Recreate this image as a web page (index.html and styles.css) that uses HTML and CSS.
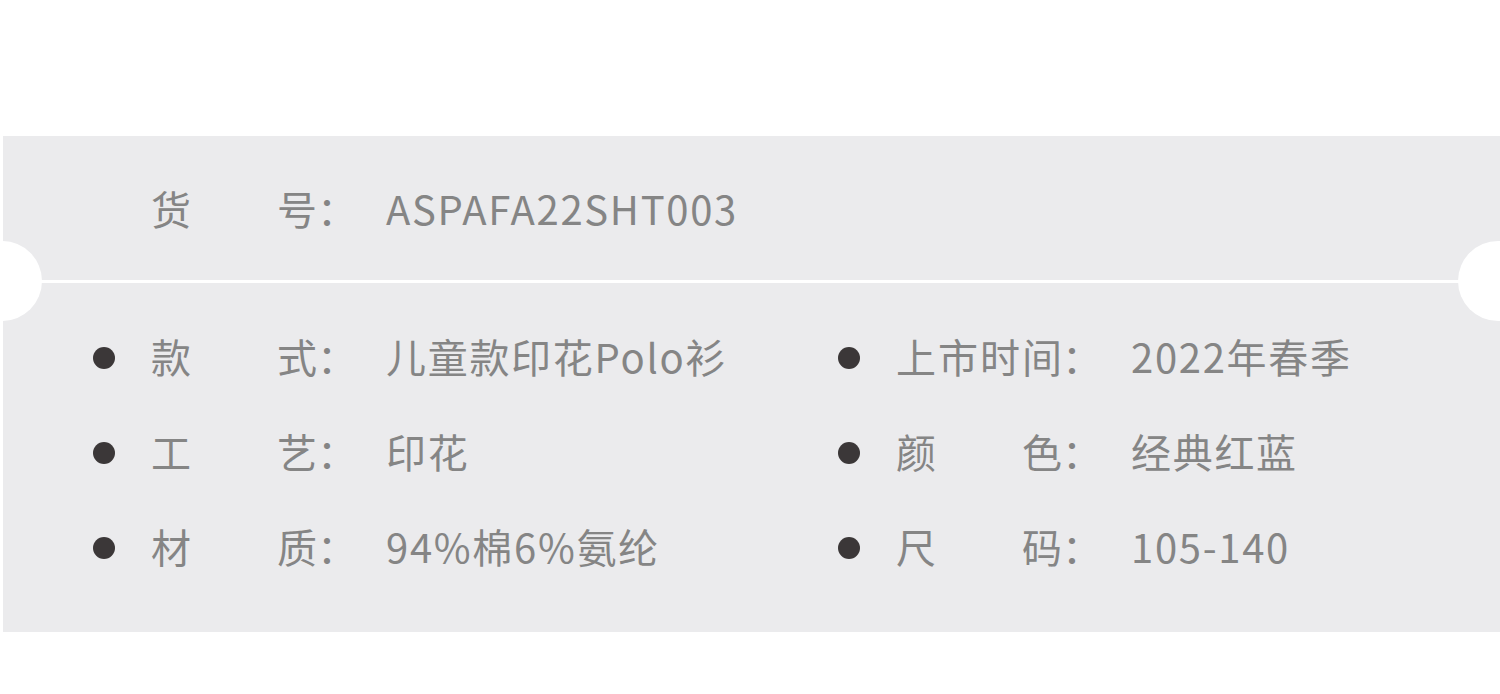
FILE: index.html
```html
<!DOCTYPE html>
<html lang="zh-CN">
<head>
    <meta charset="UTF-8">
    <meta name="viewport" content="width=device-width, initial-scale=1.0">
    <title>产品信息</title>
    <link rel="stylesheet" href="styles.css">
</head>
<body>
    <div class="card">
        <div class="head">
            <div class="item">
                <span class="key"><span class="name">货号</span><span class="colon">：</span></span>
                <span class="value">ASPAFA22SHT003</span>
            </div>
        </div>
        <div class="divider"></div>
        <span class="notch left"></span>
        <span class="notch right"></span>
        <div class="specs">
            <div class="item">
                <span class="dot"></span>
                <span class="key"><span class="name">款式</span><span class="colon">：</span></span>
                <span class="value">儿童款印花Polo衫</span>
            </div>
            <div class="item">
                <span class="dot"></span>
                <span class="key"><span class="name">上市时间</span><span class="colon">：</span></span>
                <span class="value">2022年春季</span>
            </div>
            <div class="item">
                <span class="dot"></span>
                <span class="key"><span class="name">工艺</span><span class="colon">：</span></span>
                <span class="value">印花</span>
            </div>
            <div class="item">
                <span class="dot"></span>
                <span class="key"><span class="name">颜色</span><span class="colon">：</span></span>
                <span class="value">经典红蓝</span>
            </div>
            <div class="item">
                <span class="dot"></span>
                <span class="key"><span class="name">材质</span><span class="colon">：</span></span>
                <span class="value">94%棉6%氨纶</span>
            </div>
            <div class="item">
                <span class="dot"></span>
                <span class="key"><span class="name">尺码</span><span class="colon">：</span></span>
                <span class="value">105-140</span>
            </div>
        </div>
    </div>
</body>
</html>
```

FILE: styles.css
```css
body {
    margin: 0;
    background-color: #ffffff;
    font-family: "Noto Sans CJK SC", "Noto Sans", sans-serif;
    font-size: 40px;
    color: #858585;
}
.card {
    position: relative;
    overflow: hidden;
    margin: 136px 0 0 3px;
    width: 1497px;
    height: 496px;
    background-color: #ebebed;
}
.head {
    height: 144px;
    padding-left: 148px;
    display: flex;
    align-items: center;
}
.divider {
    height: 3px;
    background-color: #ffffff;
}
.notch {
    position: absolute;
    top: 105px;
    width: 80px;
    height: 80px;
    border-radius: 50%;
    background-color: #ffffff;
}
.notch.left {
    left: -41px;
}
.notch.right {
    right: -38px;
}
.specs {
    display: grid;
    grid-template-columns: 745px 1fr;
    grid-auto-rows: 95px;
    padding: 25px 0 0 90px;
}
.item {
    display: flex;
    align-items: center;
    line-height: 1;
}
.dot {
    width: 22px;
    height: 22px;
    border-radius: 50%;
    background-color: #3b3738;
    margin-right: 36px;
    margin-top: 4px;
}
.key {
    display: flex;
    width: 235px;
    flex-shrink: 0;
}
.name {
    width: 166px;
    text-align: justify;
    text-align-last: justify;
}
.value {
    white-space: nowrap;
    letter-spacing: 1.7px;
}
```
